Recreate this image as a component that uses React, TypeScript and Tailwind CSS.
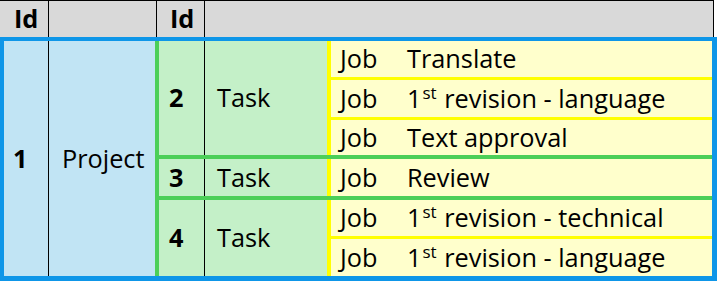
const font = { fontFamily: '"Open Sans", "Noto Sans", sans-serif' };

const st = <sup className="text-[17px] relative -top-[9px] ml-[1px] mr-[1px]">st</sup>;

const groups: { id: number; jobs: { text: React.ReactNode; h: string }[] }[] = [
  {
    id: 2,
    jobs: [
      { text: "Translate", h: "h-[36px]" },
      { text: <>1{st} revision - language</>, h: "h-[40px]" },
      { text: "Text approval", h: "h-[38px]" },
    ],
  },
  { id: 3, jobs: [{ text: "Review", h: "h-[37px]" }] },
  {
    id: 4,
    jobs: [
      { text: <>1{st} revision - technical</>, h: "h-[36px]" },
      { text: <>1{st} revision - language</>, h: "h-[40px]" },
    ],
  },
];

function TaskGroup({ id, jobs, first }: { id: number; jobs: { text: React.ReactNode; h: string }[]; first: boolean }) {
  return (
    <div className={`flex bg-[#c4f0c8] ${first ? "" : "border-t-4 border-[#4ccf58]"}`}>
      <div className="w-[46px] border-r border-black flex items-center pl-[10px] font-bold">{id}</div>
      <div className="w-[122px] flex items-center pl-[12px]">Task</div>
      <div className="flex-1 flex flex-col bg-[#ffffcc] border-l-4 border-[#ffff00]">
        {jobs.map((j, i) => (
          <div
            key={i}
            className={`${j.h} flex items-center pl-[9px] ${i > 0 ? "border-t-[3px] border-[#ffff00] pt-[1px]" : ""}`}
          >
            <span className="w-[67px]">Job</span>
            <span>{j.text}</span>
          </div>
        ))}
      </div>
    </div>
  );
}

export default function App() {
  return (
    <div className="w-[717px] h-[281px] bg-white text-black text-[25.3px] leading-none" style={font}>
      <div className="w-[714px] h-[37px] flex bg-[#d9d9d9] border-t border-r border-black font-bold">
        <div className="w-[49px] border-r border-black flex items-center pl-[14px]">Id</div>
        <div className="w-[108px] border-r border-black"></div>
        <div className="w-[48px] border-r border-black flex items-center pl-[13px]">Id</div>
        <div className="flex-1"></div>
      </div>
      <div className="h-[244px] flex border-4 border-r-[5px] border-b-[5px] border-[#0e96e8]">
        <div className="w-[45px] bg-[#c1e4f4] border-r border-black flex items-center pl-[9px] font-bold">1</div>
        <div className="w-[106px] bg-[#c1e4f4] flex items-center pl-[13px]">Project</div>
        <div className="flex-1 flex flex-col border-l-4 border-[#4ccf58]">
          {groups.map((g, i) => (
            <TaskGroup key={g.id} id={g.id} jobs={g.jobs} first={i === 0} />
          ))}
        </div>
      </div>
    </div>
  );
}
